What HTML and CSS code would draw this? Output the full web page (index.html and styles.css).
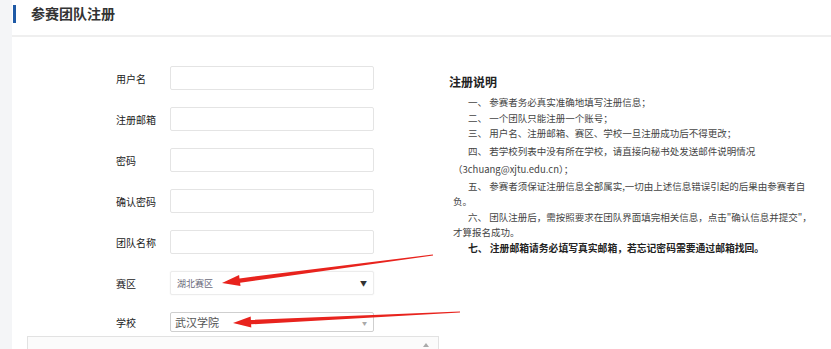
FILE: index.html
```html
<!DOCTYPE html>
<html lang="zh">
<head>
<meta charset="utf-8">
<link rel="stylesheet" href="styles.css">
</head>
<body>
<div class="page">
  <div class="header"><h1 class="title">参赛团队注册</h1></div>
  <div class="main">
    <form class="form">
      <div class="row"><label class="label">用户名</label><div class="input"></div></div>
      <div class="row"><label class="label">注册邮箱</label><div class="input"></div></div>
      <div class="row"><label class="label">密码</label><div class="input"></div></div>
      <div class="row"><label class="label">确认密码</label><div class="input"></div></div>
      <div class="row"><label class="label">团队名称</label><div class="input"></div></div>
      <div class="row"><label class="label">赛区</label><div class="input select select-a"><span class="sel-text">湖北赛区</span><span class="sel-arrow">▼</span></div></div>
      <div class="row"><label class="label">学校</label><div class="input select select-b"><span class="sel-text">武汉学院</span><span class="sel-arrow">▼</span></div></div>
    </form>
    <div class="notes">
      <h2 class="notes-title">注册说明</h2>
      <p class="note">一、 参赛者务必真实准确地填写注册信息；</p>
      <p class="note">二、 一个团队只能注册一个账号；</p>
      <p class="note">三、 用户名、注册邮箱、赛区、学校一旦注册成功后不得更改；</p>
      <p class="note note-tall">四、 若学校列表中没有所在学校，请直接向秘书处发送邮件说明情况（3chuang@xjtu.edu.cn）；</p>
      <p class="note">五、 参赛者须保证注册信息全部属实,一切由上述信息错误引起的后果由参赛者自负。</p>
      <p class="note">六、 团队注册后，需按照要求在团队界面填完相关信息，点击"确认信息并提交"，才算报名成功。</p>
      <p class="note note-bold">七、 注册邮箱请务必填写真实邮箱，若忘记密码需要通过邮箱找回。</p>
    </div>
  </div>
  <div class="listbox"><span class="scroll-up"></span></div>
</div>
<svg class="marks" width="831" height="349" viewBox="0 0 831 349">
  <polygon fill="#e8231d" points="432.9,254.4 433.1,255.6 240.1,282.8 240.5,286.1 222,283 239.1,275.1 239.5,278.4"/>
  <polygon fill="#e8231d" points="460,311.4 460,312.6 251.1,324.3 251.3,327.6 233,323 250.7,316.6 250.9,319.9"/>
</svg>
</body>
</html>
```

FILE: styles.css
```css
html, body {
  margin: 0;
  padding: 0;
}
body {
  background: #f4f5f7;
  font-family: "Noto Sans CJK SC", "Liberation Sans", sans-serif;
  color: #333;
  width: 831px;
  height: 349px;
  overflow: hidden;
  position: relative;
}
.page {
  margin-left: 12px;
  background: #fff;
  height: 349px;
}
.header {
  height: 37px;
  border-bottom: 2px solid #efefef;
  display: flex;
  align-items: flex-start;
  padding-top: 5px;
  box-sizing: border-box;
}
.header::before {
  content: "";
  width: 3px;
  height: 18px;
  margin-left: 1px;
  background: #1f5aa6;
}
.title {
  margin: 0 0 0 15px;
  font-size: 14px;
  line-height: 16px;
  font-weight: bold;
  color: #333;
}
.main {
  display: flex;
  align-items: flex-start;
}
.form {
  margin: 29px 0 0 104px;
  display: flex;
  flex-direction: column;
  gap: 17px;
}
.row {
  display: flex;
  align-items: center;
}
.label {
  width: 54px;
  font-size: 10px;
  color: #222;
}
.input {
  width: 204px;
  height: 24px;
  box-sizing: border-box;
  border: 1px solid #e4e4e4;
  border-radius: 2px;
  background: #fff;
}
.select {
  display: flex;
  align-items: center;
  justify-content: space-between;
  padding: 0 6px 0 6px;
}
.select-a {
  border-color: #ececec;
  box-shadow: 0 0 2px rgba(0,0,0,0.06);
}
.select-a .sel-text {
  font-size: 9px;
  color: #6a6a7a;
}
.select-a .sel-arrow {
  font-size: 7px;
  color: #333;
}
.select-b {
  border-color: #cfcfcf;
  height: 20px;
  padding-left: 4px;
}
.select-b .sel-text {
  font-size: 11px;
  color: #555;
}
.select-b .sel-arrow {
  font-size: 5px;
  color: #aaa;
}
.notes {
  margin: 37px 0 0 75px;
  width: 372px;
}
.notes-title {
  margin: 0 0 5px 0;
  font-size: 12px;
  line-height: 16px;
  font-weight: bold;
  color: #222;
}
.note {
  margin: 0 0 0 4px;
  font-size: 9.5px;
  line-height: 15.5px;
  color: #444;
  text-indent: 15px;
}
.note-tall {
  line-height: 18px;
  margin-bottom: 1px;
}
.note-bold {
  font-weight: bold;
  color: #222;
  font-size: 9.8px;
}
.listbox {
  margin: 4px 0 0 15px;
  width: 410px;
  height: 20px;
  border: 1px solid #e2e2e2;
  background: #fbfbfb;
  display: flex;
  justify-content: flex-end;
}
.scroll-up {
  width: 0;
  height: 0;
  border-left: 3px solid transparent;
  border-right: 3px solid transparent;
  border-bottom: 4px solid #aaa;
  margin: 6px 9px 0 0;
}
.marks {
  position: absolute;
  left: 0;
  top: 0;
  pointer-events: none;
}
```
